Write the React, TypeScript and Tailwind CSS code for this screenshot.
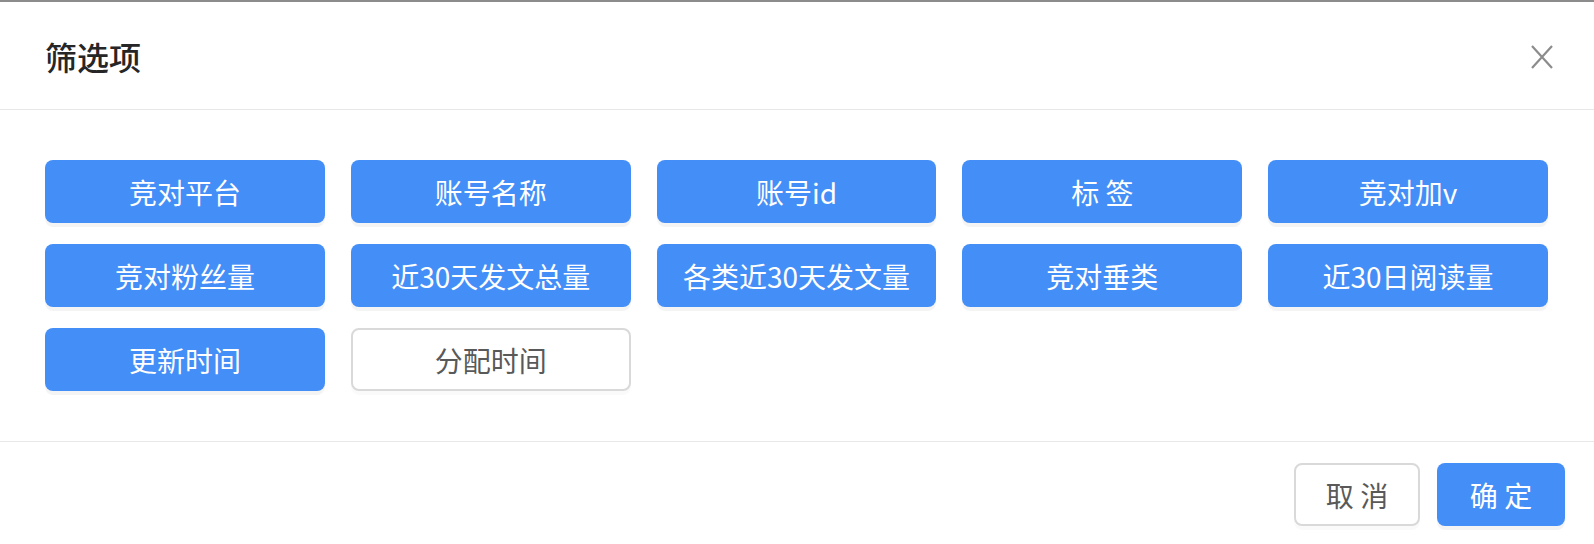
const options = [
  { label: "竞对平台", on: true },
  { label: "账号名称", on: true },
  { label: "账号id", on: true },
  { label: "标 签", on: true },
  { label: "竞对加v", on: true },
  { label: "竞对粉丝量", on: true },
  { label: "近30天发文总量", on: true },
  { label: "各类近30天发文量", on: true },
  { label: "竞对垂类", on: true },
  { label: "近30日阅读量", on: true },
  { label: "更新时间", on: true },
  { label: "分配时间", on: false },
];

export default function App() {
  return (
    <div
      className="w-[1594px] h-[544px] bg-[#8c8c8c] pt-[2px] overflow-hidden"
      style={{ fontFamily: '"Noto Sans CJK SC", "Noto Sans", sans-serif' }}
    >
      <div className="bg-white h-[542px] flex flex-col">
        {/* Header */}
        <div className="h-[108px] pl-[45px] pr-[41px] flex items-center justify-between border-b border-[#e8e8e8]">
          <h2 className="text-[32px] font-medium text-[#262626] leading-none">筛选项</h2>
          <svg width="22" height="24" viewBox="0 0 22 24" className="mt-[2px]">
            <path d="M1 1 L21 23 M21 1 L1 23" stroke="#8c8c8c" strokeWidth="2.2" fill="none" />
          </svg>
        </div>

        {/* Options */}
        <div className="pt-[50px] pb-[50px] pl-[45px] pr-[46px] border-b border-[#e8e8e8]">
          <div className="grid grid-cols-5 gap-x-[26px] gap-y-[21px]">
            {options.map((o) => (
              <button
                key={o.label}
                className={`h-[63px] rounded-[8px] text-[28px] leading-none whitespace-nowrap ${
                  o.on
                    ? "bg-[#448ef7] text-white shadow-[0_4px_0_rgba(0,0,0,0.045)]"
                    : "bg-white text-[#595959] border-2 border-[#d9d9d9] shadow-[0_4px_0_rgba(0,0,0,0.02)]"
                }`}
              >
                {o.label}
              </button>
            ))}
          </div>
        </div>

        {/* Footer */}
        <div className="flex justify-end gap-[17px] pt-[21px] pr-[29px]">
          <button className="w-[126px] h-[63px] rounded-[8px] border-2 border-[#d9d9d9] bg-white text-[28px] text-[#595959] leading-none shadow-[0_4px_0_rgba(0,0,0,0.02)]">
            取 消
          </button>
          <button className="w-[128px] h-[63px] rounded-[8px] bg-[#448ef7] text-[28px] text-white leading-none shadow-[0_4px_0_rgba(0,0,0,0.045)]">
            确 定
          </button>
        </div>
      </div>
    </div>
  );
}
